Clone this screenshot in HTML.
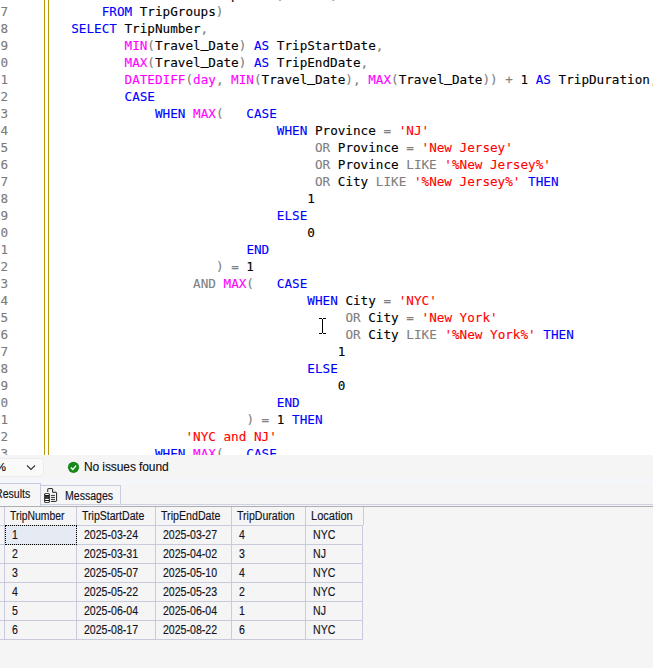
<!DOCTYPE html>
<html lang="en">
<head>
<meta charset="utf-8">
<title>SQL Query Results</title>
<style>
html,body{margin:0;padding:0;}
body{width:653px;height:668px;overflow:hidden;background:#f5f5f5;position:relative;font-family:"Liberation Sans",sans-serif;}
#editor{position:absolute;left:0;top:0;width:653px;height:455px;background:#fff;overflow:hidden;}
#editor .bar1{position:absolute;left:44px;top:0;width:1px;height:455px;background:#b8960b;}
#editor .bar2{position:absolute;left:48px;top:0;width:1px;height:455px;background:#b8960b;}
.ln{position:absolute;left:0;width:653px;height:17px;line-height:17px;font-family:"DejaVu Sans Mono", "Liberation Mono", monospace;font-size:12.65px;white-space:pre;-webkit-text-stroke:0.12px currentColor;}
.no{position:absolute;left:0.6px;color:#7b7b7b;}
.code{position:absolute;top:0;}
.u{position:relative;top:-1.5px;-webkit-text-stroke:0.7px currentColor;}
.uf{color:#9a9a9a;position:relative;top:-1.2px}
.k{color:#0000ff}.f{color:#ff00ff}.s{color:#ff0000}.g{color:#808080}.b{color:#000}
#status{position:absolute;left:0;top:455px;width:653px;height:24px;background:#f5f5f5;}
#fade{position:absolute;left:0;top:479px;width:653px;height:5px;background:linear-gradient(#f2f6fd,#f5f6f9);}
#zoom{position:absolute;left:-10px;top:458px;width:52px;height:17px;border:1px solid #ececec;border-radius:4px;background:#fafafa;}
#pct{position:absolute;left:-4.3px;top:460px;font-size:11.5px;line-height:14px;color:#000;-webkit-text-stroke:0.15px #000;}
#noissues{position:absolute;left:84px;top:460px;font-size:12px;line-height:14px;color:#0c0c10;white-space:nowrap;letter-spacing:-0.1px;-webkit-text-stroke:0.1px #0c0c10;}
#tabsbg{position:absolute;left:0;top:484px;width:653px;height:22px;background:#f5f5f5;}
#tabres{position:absolute;left:-3px;top:483px;width:42px;height:22px;border:1px solid #c9cce0;border-bottom:none;background:#f6f6f6;}
#tabmsg{position:absolute;left:40px;top:485px;width:80px;height:18px;border:1px solid #c9cce0;border-left:none;background:#f6f6f6;}
.tabt,.hc,.gc{-webkit-text-stroke:0.15px currentColor;}
.tabt{position:absolute;font-size:12px;line-height:13px;color:#12121c;white-space:nowrap;}
#gridtop{position:absolute;left:0;top:506px;width:653px;height:1px;background:#adadb3;}
#tabline{position:absolute;left:41px;top:504px;width:612px;height:1px;background:#cfd1e2;}
.sq{display:inline-block;transform:scaleX(0.88);transform-origin:0 50%;}
.hc .sq{transform:scaleX(0.865);}
.hc,.gc{position:absolute;box-sizing:border-box;font-size:12px;color:#12121c;white-space:nowrap;overflow:hidden;}
.hc{top:507px;height:18px;line-height:19px;padding-left:4.5px;background:#f5f5f5;}
.gc{height:18px;line-height:19px;padding-left:7px;}
.gline{position:absolute;background:#c9cadb;}
.sel{background:#e6eaf2;}
</style>
</head>
<body>
<div id="editor">
<div class="bar1"></div><div class="bar2"></div>
<div class="ln" style="top:-14.5px"><span class="no"></span><span class="code" style="left:185.45px"><span class="g">(</span><span class="b">     p</span><span class="g">     ,      ,</span><span class="uf">               _</span></span></div>
<div class="ln" style="top:2.5px"><span class="no">7</span><span class="code" style="left:101.67px"><span class="k">FROM</span><span class="b"> TripGroups</span><span class="g">)</span></span></div>
<div class="ln" style="top:19.5px"><span class="no">8</span><span class="code" style="left:71.20px"><span class="k">SELECT</span><span class="b"> TripNumber</span><span class="g">,</span></span></div>
<div class="ln" style="top:36.5px"><span class="no">9</span><span class="code" style="left:124.52px"><span class="f">MIN</span><span class="g">(</span><span class="b">Travel<span class="u">_</span>Date</span><span class="g">)</span><span class="k"> AS</span><span class="b"> TripStartDate</span><span class="g">,</span></span></div>
<div class="ln" style="top:53.5px"><span class="no">0</span><span class="code" style="left:124.52px"><span class="f">MAX</span><span class="g">(</span><span class="b">Travel<span class="u">_</span>Date</span><span class="g">)</span><span class="k"> AS</span><span class="b"> TripEndDate</span><span class="g">,</span></span></div>
<div class="ln" style="top:70.5px"><span class="no">1</span><span class="code" style="left:124.52px"><span class="f">DATEDIFF</span><span class="g">(</span><span class="f">day</span><span class="g">,</span><span class="f"> MIN</span><span class="g">(</span><span class="b">Travel<span class="u">_</span>Date</span><span class="g">),</span><span class="f"> MAX</span><span class="g">(</span><span class="b">Travel<span class="u">_</span>Date</span><span class="g">))</span><span class="g"> +</span><span class="b"> 1</span><span class="k"> AS</span><span class="b"> TripDuration</span><span class="g">,</span></span></div>
<div class="ln" style="top:87.5px"><span class="no">2</span><span class="code" style="left:124.52px"><span class="k">CASE</span></span></div>
<div class="ln" style="top:104.5px"><span class="no">3</span><span class="code" style="left:154.99px"><span class="k">WHEN</span><span class="f"> MAX</span><span class="g">(</span><span class="k">   CASE</span></span></div>
<div class="ln" style="top:121.5px"><span class="no">4</span><span class="code" style="left:276.86px"><span class="k">WHEN</span><span class="b"> Province</span><span class="g"> =</span><span class="s"> 'NJ'</span></span></div>
<div class="ln" style="top:138.5px"><span class="no">5</span><span class="code" style="left:314.94px"><span class="g">OR</span><span class="b"> Province</span><span class="g"> =</span><span class="s"> 'New Jersey'</span></span></div>
<div class="ln" style="top:155.5px"><span class="no">6</span><span class="code" style="left:314.94px"><span class="g">OR</span><span class="b"> Province</span><span class="g"> LIKE</span><span class="s"> '%New Jersey%'</span></span></div>
<div class="ln" style="top:172.5px"><span class="no">7</span><span class="code" style="left:314.94px"><span class="g">OR</span><span class="b"> City</span><span class="g"> LIKE</span><span class="s"> '%New Jersey%'</span><span class="k"> THEN</span></span></div>
<div class="ln" style="top:189.5px"><span class="no">8</span><span class="code" style="left:307.33px"><span class="b">1</span></span></div>
<div class="ln" style="top:206.5px"><span class="no">9</span><span class="code" style="left:276.86px"><span class="k">ELSE</span></span></div>
<div class="ln" style="top:223.5px"><span class="no">0</span><span class="code" style="left:307.33px"><span class="b">0</span></span></div>
<div class="ln" style="top:240.5px"><span class="no">1</span><span class="code" style="left:246.39px"><span class="k">END</span></span></div>
<div class="ln" style="top:257.5px"><span class="no">2</span><span class="code" style="left:215.92px"><span class="g">) =</span><span class="b"> 1</span></span></div>
<div class="ln" style="top:274.5px"><span class="no">3</span><span class="code" style="left:193.07px"><span class="g">AND</span><span class="f"> MAX</span><span class="g">(</span><span class="k">   CASE</span></span></div>
<div class="ln" style="top:291.5px"><span class="no">4</span><span class="code" style="left:307.33px"><span class="k">WHEN</span><span class="b"> City</span><span class="g"> =</span><span class="s"> 'NYC'</span></span></div>
<div class="ln" style="top:308.5px"><span class="no">5</span><span class="code" style="left:345.41px"><span class="g">OR</span><span class="b"> City</span><span class="g"> =</span><span class="s"> 'New York'</span></span></div>
<div class="ln" style="top:325.5px"><span class="no">6</span><span class="code" style="left:345.41px"><span class="g">OR</span><span class="b"> City</span><span class="g"> LIKE</span><span class="s"> '%New York%'</span><span class="k"> THEN</span></span></div>
<div class="ln" style="top:342.5px"><span class="no">7</span><span class="code" style="left:337.80px"><span class="b">1</span></span></div>
<div class="ln" style="top:359.5px"><span class="no">8</span><span class="code" style="left:307.33px"><span class="k">ELSE</span></span></div>
<div class="ln" style="top:376.5px"><span class="no">9</span><span class="code" style="left:337.80px"><span class="b">0</span></span></div>
<div class="ln" style="top:393.5px"><span class="no">0</span><span class="code" style="left:276.86px"><span class="k">END</span></span></div>
<div class="ln" style="top:410.5px"><span class="no">1</span><span class="code" style="left:246.39px"><span class="g">) =</span><span class="b"> 1</span><span class="k"> THEN</span></span></div>
<div class="ln" style="top:427.5px"><span class="no">2</span><span class="code" style="left:185.45px"><span class="s">'NYC and NJ'</span></span></div>
<div class="ln" style="top:444.5px"><span class="no">3</span><span class="code" style="left:154.99px"><span class="k">WHEN</span><span class="f"> MAX</span><span class="g">(</span><span class="k">   CASE</span></span></div>
<svg style="position:absolute;left:318px;top:317px" width="9" height="18" viewBox="0 0 9 18" shape-rendering="crispEdges"><rect x="4" y="2" width="1" height="14" fill="#000"/><rect x="1" y="1" width="3" height="1" fill="#000"/><rect x="5" y="1" width="3" height="1" fill="#000"/><rect x="1" y="16" width="3" height="1" fill="#000"/><rect x="5" y="16" width="3" height="1" fill="#000"/></svg>
</div>
<div id="status"></div>
<div id="fade"></div>
<div id="zoom"></div>
<div id="pct">%</div>
<svg style="position:absolute;left:25px;top:463px" width="12" height="9" viewBox="0 0 12 9"><path d="M2 2.5 L6 6.5 L10 2.5" fill="none" stroke="#333" stroke-width="1.1"/></svg>
<svg style="position:absolute;left:67px;top:461px" width="13" height="13" viewBox="0 0 13 13"><circle cx="6.5" cy="6.3" r="5.6" fill="#16891a"/><path d="M3.9 6.5 L5.8 8.4 L9.2 4.6" fill="none" stroke="#fff" stroke-width="1.4"/></svg>
<div id="noissues">No issues found</div>
<div id="tabsbg"></div>
<div id="tabmsg"></div>
<div id="tabres"></div>
<div class="tabt" style="left:-5px;top:488px"><span class="sq">Results</span></div>
<div class="tabt" style="left:65px;top:490px"><span class="sq">Messages</span></div>
<svg style="position:absolute;left:40px;top:484px" width="24" height="24" viewBox="0 0 24 24"><path d="M7.75 7.6 V5.1 Q7.75 4.6 8.3 4.6 H12.1 Q12.6 4.6 12.6 5.1 V8.3 H16.1 Q16.6 8.3 16.6 8.8 V16.6 Q16.6 17.4 15.8 17.4 H11.3" fill="none" stroke="#111" stroke-width="0.95" stroke-linecap="round"/><path d="M12.9 4.9 L16.4 8.1" stroke="#b5b5b5" stroke-width="0.6" fill="none"/><path d="M11.3 11.4 H14.6 M11.3 13.4 H14.6 M11.3 15.4 H14.6" stroke="#111" stroke-width="0.85" stroke-linecap="round" fill="none"/><rect x="4.2" y="9.2" width="5.6" height="9.6" rx="1.1" fill="#111"/><rect x="5.3" y="11.9" width="3.4" height="2.3" fill="#3a3a3a"/><rect x="5.1" y="10.05" width="3.8" height="1" rx="0.4" fill="#fff"/><rect x="5.1" y="14.8" width="3.8" height="1.15" rx="0.4" fill="#fff"/><rect x="5.1" y="16.95" width="3.8" height="1.05" rx="0.4" fill="#fff"/></svg>
<div id="tabline"></div>
<div id="gridtop"></div>
<div class="hc" style="left:5px;width:71px"><span class="sq" style="transform:scaleX(0.865)">TripNumber</span></div>
<div class="hc" style="left:77px;width:78px"><span class="sq" style="transform:scaleX(0.879)">TripStartDate</span></div>
<div class="hc" style="left:156px;width:75px"><span class="sq" style="transform:scaleX(0.888)">TripEndDate</span></div>
<div class="hc" style="left:232px;width:73px"><span class="sq" style="transform:scaleX(0.879)">TripDuration</span></div>
<div class="hc" style="left:306px;width:58px"><span class="sq" style="transform:scaleX(0.92)">Location</span></div>
<div class="gc sel" style="left:5px;top:526px;width:71px"><span class="sq">1</span></div>
<div class="gc" style="left:77px;top:526px;width:78px"><span class="sq">2025-03-24</span></div>
<div class="gc" style="left:156px;top:526px;width:75px"><span class="sq">2025-03-27</span></div>
<div class="gc" style="left:232px;top:526px;width:73px"><span class="sq">4</span></div>
<div class="gc" style="left:306px;top:526px;width:56px"><span class="sq">NYC</span></div>
<div class="gc" style="left:5px;top:545px;width:71px"><span class="sq">2</span></div>
<div class="gc" style="left:77px;top:545px;width:78px"><span class="sq">2025-03-31</span></div>
<div class="gc" style="left:156px;top:545px;width:75px"><span class="sq">2025-04-02</span></div>
<div class="gc" style="left:232px;top:545px;width:73px"><span class="sq">3</span></div>
<div class="gc" style="left:306px;top:545px;width:56px"><span class="sq">NJ</span></div>
<div class="gc" style="left:5px;top:564px;width:71px"><span class="sq">3</span></div>
<div class="gc" style="left:77px;top:564px;width:78px"><span class="sq">2025-05-07</span></div>
<div class="gc" style="left:156px;top:564px;width:75px"><span class="sq">2025-05-10</span></div>
<div class="gc" style="left:232px;top:564px;width:73px"><span class="sq">4</span></div>
<div class="gc" style="left:306px;top:564px;width:56px"><span class="sq">NYC</span></div>
<div class="gc" style="left:5px;top:583px;width:71px"><span class="sq">4</span></div>
<div class="gc" style="left:77px;top:583px;width:78px"><span class="sq">2025-05-22</span></div>
<div class="gc" style="left:156px;top:583px;width:75px"><span class="sq">2025-05-23</span></div>
<div class="gc" style="left:232px;top:583px;width:73px"><span class="sq">2</span></div>
<div class="gc" style="left:306px;top:583px;width:56px"><span class="sq">NYC</span></div>
<div class="gc" style="left:5px;top:602px;width:71px"><span class="sq">5</span></div>
<div class="gc" style="left:77px;top:602px;width:78px"><span class="sq">2025-06-04</span></div>
<div class="gc" style="left:156px;top:602px;width:75px"><span class="sq">2025-06-04</span></div>
<div class="gc" style="left:232px;top:602px;width:73px"><span class="sq">1</span></div>
<div class="gc" style="left:306px;top:602px;width:56px"><span class="sq">NJ</span></div>
<div class="gc" style="left:5px;top:621px;width:71px"><span class="sq">6</span></div>
<div class="gc" style="left:77px;top:621px;width:78px"><span class="sq">2025-08-17</span></div>
<div class="gc" style="left:156px;top:621px;width:75px"><span class="sq">2025-08-22</span></div>
<div class="gc" style="left:232px;top:621px;width:73px"><span class="sq">6</span></div>
<div class="gc" style="left:306px;top:621px;width:56px"><span class="sq">NYC</span></div>
<div class="gline" style="left:4px;top:507px;width:1px;height:133px"></div>
<div class="gline" style="left:76px;top:507px;width:1px;height:133px"></div>
<div class="gline" style="left:155px;top:507px;width:1px;height:133px"></div>
<div class="gline" style="left:231px;top:507px;width:1px;height:133px"></div>
<div class="gline" style="left:305px;top:507px;width:1px;height:133px"></div>
<div class="gline" style="left:363px;top:507px;width:1px;height:18px"></div>
<div class="gline" style="left:362px;top:525px;width:1px;height:115px"></div>
<div class="gline" style="left:0;top:525px;width:363px;height:1px"></div>
<div class="gline" style="left:0;top:544px;width:363px;height:1px"></div>
<div class="gline" style="left:0;top:563px;width:363px;height:1px"></div>
<div class="gline" style="left:0;top:582px;width:363px;height:1px"></div>
<div class="gline" style="left:0;top:601px;width:363px;height:1px"></div>
<div class="gline" style="left:0;top:620px;width:363px;height:1px"></div>
<div class="gline" style="left:0;top:639px;width:363px;height:1px"></div>
<div style="position:absolute;left:5px;top:525px;width:72px;height:20px;box-sizing:border-box;border:1px dotted #000"></div>
</body>
</html>
